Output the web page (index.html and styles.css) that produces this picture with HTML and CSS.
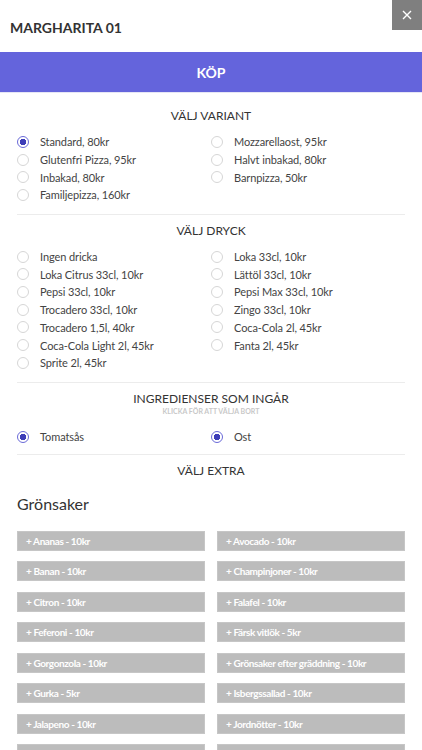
FILE: index.html
```html
<!DOCTYPE html>
<html lang="sv">
<head>
<meta charset="utf-8">
<title>Margharita 01</title>
<link rel="stylesheet" href="styles.css">
</head>
<body>
<div class="modal">
  <header class="head">
    <h1 class="title">MARGHARITA 01</h1>
    <button class="close" aria-label="Stäng">
      <svg width="10" height="10" viewBox="0 0 10 10"><path d="M1 1L9 9M9 1L1 9" stroke="#fff" stroke-width="1.4" fill="none"/></svg>
    </button>
  </header>
  <div class="buy">KÖP</div>

  <section class="section">
    <h2 class="stitle">VÄLJ VARIANT</h2>
    <div class="opts">
      <label class="opt"><span class="radio on"></span>Standard, 80kr</label>
      <label class="opt"><span class="radio"></span>Mozzarellaost, 95kr</label>
      <label class="opt"><span class="radio"></span>Glutenfri Pizza, 95kr</label>
      <label class="opt"><span class="radio"></span>Halvt inbakad, 80kr</label>
      <label class="opt"><span class="radio"></span>Inbakad, 80kr</label>
      <label class="opt"><span class="radio"></span>Barnpizza, 50kr</label>
      <label class="opt"><span class="radio"></span>Familjepizza, 160kr</label>
    </div>
  </section>
  <hr class="div">

  <section class="section">
    <h2 class="stitle">VÄLJ DRYCK</h2>
    <div class="opts">
      <label class="opt"><span class="radio"></span>Ingen dricka</label>
      <label class="opt"><span class="radio"></span>Loka 33cl, 10kr</label>
      <label class="opt"><span class="radio"></span>Loka Citrus 33cl, 10kr</label>
      <label class="opt"><span class="radio"></span>Lättöl 33cl, 10kr</label>
      <label class="opt"><span class="radio"></span>Pepsi 33cl, 10kr</label>
      <label class="opt"><span class="radio"></span>Pepsi Max 33cl, 10kr</label>
      <label class="opt"><span class="radio"></span>Trocadero 33cl, 10kr</label>
      <label class="opt"><span class="radio"></span>Zingo 33cl, 10kr</label>
      <label class="opt"><span class="radio"></span>Trocadero 1,5l, 40kr</label>
      <label class="opt"><span class="radio"></span>Coca-Cola 2l, 45kr</label>
      <label class="opt"><span class="radio"></span>Coca-Cola Light 2l, 45kr</label>
      <label class="opt"><span class="radio"></span>Fanta 2l, 45kr</label>
      <label class="opt"><span class="radio"></span>Sprite 2l, 45kr</label>
    </div>
  </section>
  <hr class="div">

  <section class="section ingr">
    <h2 class="stitle">INGREDIENSER SOM INGÅR</h2>
    <p class="sub">KLICKA FÖR ATT VÄLJA BORT</p>
    <div class="opts ingopts">
      <label class="opt"><span class="radio on"></span>Tomatsås</label>
      <label class="opt"><span class="radio on"></span>Ost</label>
    </div>
  </section>
  <hr class="div">

  <section class="section extra">
    <h2 class="stitle">VÄLJ EXTRA</h2>
    <h3 class="cat">Grönsaker</h3>
    <div class="btns">
      <button class="add">+ Ananas - 10kr</button>
      <button class="add">+ Avocado - 10kr</button>
      <button class="add">+ Banan - 10kr</button>
      <button class="add">+ Champinjoner - 10kr</button>
      <button class="add">+ Citron - 10kr</button>
      <button class="add">+ Falafel - 10kr</button>
      <button class="add">+ Feferoni - 10kr</button>
      <button class="add">+ Färsk vitlök - 5kr</button>
      <button class="add">+ Gorgonzola - 10kr</button>
      <button class="add">+ Grönsaker efter gräddning - 10kr</button>
      <button class="add">+ Gurka - 5kr</button>
      <button class="add">+ Isbergssallad - 10kr</button>
      <button class="add">+ Jalapeno - 10kr</button>
      <button class="add">+ Jordnötter - 10kr</button>
      <button class="add">+ Kapris - 10kr</button>
      <button class="add">+ Kronärtskocka - 10kr</button>
    </div>
  </section>
</div>
</body>
</html>
```

FILE: styles.css
```css
html, body {
  margin: 0;
  padding: 0;
  background: #fff;
}
body {
  font-family: Lato, "Liberation Sans", sans-serif;
  color: #333;
  overflow: hidden;
}
.modal {
  width: 422px;
}
.head {
  position: relative;
  height: 52px;
  display: flex;
  align-items: center;
  padding-left: 10px;
  box-sizing: border-box;
}
.title {
  margin: 3px 0 0;
  font-size: 14px;
  font-weight: 700;
  color: #333;
  letter-spacing: 0;
}
.close {
  position: absolute;
  top: 0;
  right: 0;
  width: 30px;
  height: 30px;
  border: 0;
  padding: 0;
  background: #7f7f7f;
  display: flex;
  align-items: center;
  justify-content: center;
}
.buy {
  height: 40px;
  background: #6464dc;
  color: #fff;
  font-size: 14px;
  font-weight: 700;
  display: flex;
  align-items: center;
  justify-content: center;
  border-bottom: 1px solid #e6e6f5;
}
.section {
  margin: 0 17px;
  padding: 8px 0 10px;
}
.section:first-of-type {
  padding-top: 15px;
}
.stitle {
  margin: 0 0 9px;
  font-size: 12px;
  font-weight: 400;
  line-height: 16px;
  text-align: center;
  color: #333;
}
.opts {
  display: grid;
  grid-template-columns: 194px 194px;
}
.opt {
  display: flex;
  align-items: center;
  height: 17.7px;
  font-size: 11px;
  color: #444;
  letter-spacing: -0.1px;
}
.radio {
  width: 12px;
  height: 12px;
  box-sizing: border-box;
  border: 1px solid #d6d6d6;
  border-radius: 50%;
  margin-right: 11px;
  flex: none;
  background: #fff;
}
.radio.on {
  border: 1.5px solid #6a6ad8;
  background: radial-gradient(circle, #3d3db8 0 3px, #fff 3.4px);
}
.div {
  margin: 0 17px;
  border: 0;
  border-top: 1px solid #ececec;
  height: 0;
}
.sub {
  margin: -9px 0 0;
  font-size: 7px;
  font-weight: 700;
  line-height: 8px;
  text-align: center;
  color: #c8c8c8;
}
.ingopts {
  margin-top: 11px;
}
.ingopts .opt {
  height: 22px;
}
.ingr {
  padding-bottom: 6px;
}
.extra .stitle {
  margin-bottom: 15px;
}
.cat {
  margin: 0 0 17px;
  font-size: 16px;
  font-weight: 400;
  line-height: 20px;
  color: #333;
}
.btns {
  display: grid;
  grid-template-columns: 188px 188px;
  column-gap: 12px;
  row-gap: 10.5px;
}
.add {
  height: 20px;
  border: 1px solid #c6c6c6;
  background: #bcbcbc;
  color: #fff;
  font-family: Lato, "Liberation Sans", sans-serif;
  font-size: 10px;
  font-weight: 700;
  letter-spacing: -0.4px;
  text-align: left;
  padding: 0 0 0 8px;
  white-space: nowrap;
}
```
